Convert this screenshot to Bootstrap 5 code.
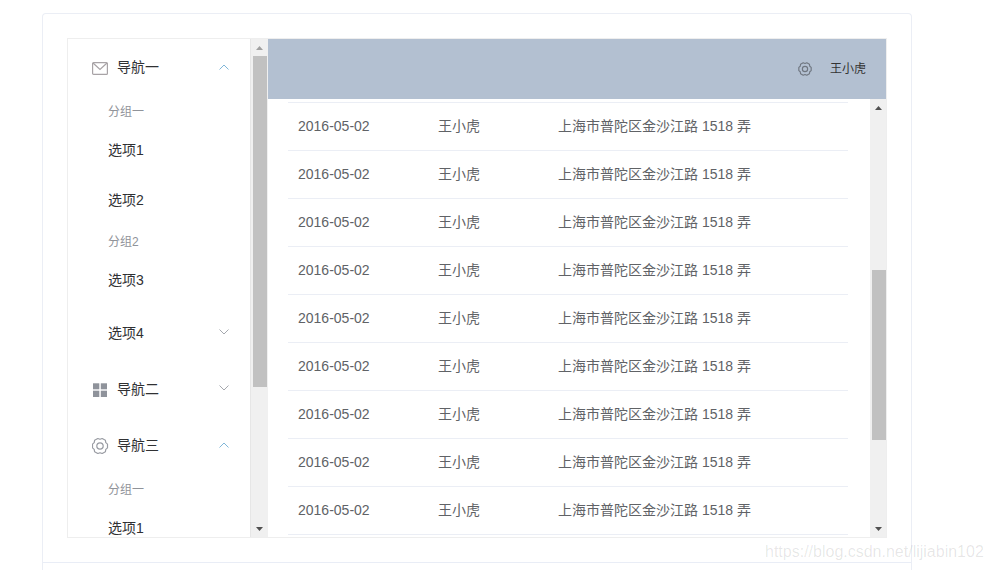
<!DOCTYPE html>
<html lang="zh">
<head>
<meta charset="utf-8">
<title>Layout</title>
<link href="https://cdn.jsdelivr.net/npm/bootstrap@5.3.0/dist/css/bootstrap.min.css" rel="stylesheet">
<style>
html,body{height:570px;overflow:hidden;background:#fff}
body{font-family:"Liberation Sans","Noto Sans CJK SC",sans-serif;font-size:14px;position:relative}
.shell{margin:13px 0 0 42px;width:870px;height:560px;border:1px solid #ebeef5;border-bottom:0;border-radius:4px 4px 0 0}
.shell-top{padding:24px 24px 24px;height:549px;border-bottom:1px solid #e9edf6}
.frame{height:500px;border:1px solid #eee;width:820px;overflow:hidden}
.side{width:183px;border-right:1px solid #e6e6e6;overflow:hidden;flex:none;color:#303133}
.nav-t{height:56px;padding:0 20px 0 24px}
.nav-t svg.ic{width:18px;height:18px;margin-right:7px;flex:none}
.nav-s{height:50px;padding-left:40px}
.nav-sub{height:56px;padding:0 20px 0 40px}
.grp{height:30px;padding-left:40px;padding-top:4px;font-size:12px;color:#909399}
.chev{width:10px;height:6px;margin-left:auto;margin-right:1px;flex:none}
.chev-d{margin-bottom:3px}
.bar{width:17px;flex:none;background:#f0f0f0}
.bar-btn{height:17px;color:#505050}
.bar-btn svg{width:7px;height:4px;display:block}
.thumb{background:#c1c1c1;margin:0 1px 0 2px}
.head{height:60px;background:#b3c0d1;padding-right:21px;color:#333;font-size:12px}
.head svg{width:14px;height:14px;margin-right:18px}
.pane{min-height:0}
.rows{padding-left:20px;padding-right:22px;overflow:hidden}
.rows table{width:560px;table-layout:fixed;margin:0;color:#606266;border-collapse:separate;border-spacing:0}
.rows td{height:48px;padding:0 0 0 10px;border:0;border-bottom:1px solid #ebeef5;vertical-align:middle;font-size:14px;color:#606266;background:transparent;box-shadow:none}
.rows .cut td{height:4px;padding:0}
.mark-w{position:absolute;left:765px;top:543px;font-size:16px;line-height:18px;color:rgba(0,0,0,.1);white-space:nowrap}
</style>
</head>
<body>
<div class="shell">
  <div class="shell-top">
    <div class="frame d-flex">
      <div class="side">
        <div class="nav-t d-flex align-items-center">
          <svg class="ic" viewBox="0 0 18 18" fill="none" stroke="#a8a3a6" stroke-width="1.2"><rect x=".6" y="4.600" width="14.800" height="11.800" rx="1"/><path d="M1 5l7 6.500L15 5"/></svg>
          <span>导航一</span>
          <svg class="chev" viewBox="0 0 10 6" fill="none" stroke="#7fb6d8"><path d="M.5 5.5L5 1l4.500 4.500"/></svg>
        </div>
        <div class="grp d-flex align-items-center">分组一</div>
        <div class="nav-s d-flex align-items-center">选项1</div>
        <div class="nav-s d-flex align-items-center">选项2</div>
        <div class="grp d-flex align-items-center">分组2</div>
        <div class="nav-s d-flex align-items-center">选项3</div>
        <div class="nav-sub d-flex align-items-center">
          <span>选项4</span>
          <svg class="chev chev-d" viewBox="0 0 10 6" fill="none" stroke="#a5a8ae"><path d="M.5.5L5 5 9.500.5"/></svg>
        </div>
        <div class="nav-t d-flex align-items-center">
          <svg class="ic" viewBox="0 0 18 18" fill="#8f939b"><rect x="1" y="3.300" width="6.300" height="6"/><rect x="8.800" y="3.300" width="6.200" height="6"/><rect x="1" y="10.700" width="6.300" height="6.300"/><rect x="8.800" y="10.700" width="6.200" height="6.300"/></svg>
          <span>导航二</span>
          <svg class="chev chev-d" viewBox="0 0 10 6" fill="none" stroke="#a5a8ae"><path d="M.5.5L5 5 9.500.5"/></svg>
        </div>
        <div class="nav-t d-flex align-items-center">
          <svg class="ic" viewBox="0 0 18 18" fill="none" stroke="#999ca3" stroke-width="1.2" stroke-linejoin="round"><g transform="translate(8 10)"><polygon points="7.5,-1.9 7.5,1.900 5.800,3.350 5.400,5.750 2.200,7.500 0,6.700 -2.200,7.500 -5.400,5.750 -5.800,3.350 -7.500,1.900 -7.500,-1.900 -5.800,-3.350 -5.400,-5.750 -2.200,-7.500 0,-6.700 2.200,-7.500 5.400,-5.750 5.800,-3.350"/><circle r="3.200"/></g></svg>
          <span>导航三</span>
          <svg class="chev" viewBox="0 0 10 6" fill="none" stroke="#7fb6d8"><path d="M.5 5.5L5 1l4.500 4.500"/></svg>
        </div>
        <div class="grp d-flex align-items-center">分组一</div>
        <div class="nav-s d-flex align-items-center">选项1</div>
      </div>
      <div class="bar d-flex flex-column">
        <div class="bar-btn d-flex align-items-center justify-content-center"><svg viewBox="0 0 7 4" fill="#a0a0a0"><path d="M3.500 0L7 4H0z"/></svg></div>
        <div class="flex-grow-1"><div class="thumb" style="height:331px"></div></div>
        <div class="bar-btn d-flex align-items-center justify-content-center"><svg viewBox="0 0 7 4" fill="#505050"><path d="M0 0h7L3.500 4z"/></svg></div>
      </div>
      <div class="flex-grow-1 d-flex flex-column pane">
        <div class="head d-flex align-items-center justify-content-end">
          <svg viewBox="-8.500 -8.500 17 17" fill="none" stroke="#6f7680" stroke-width="1.400" stroke-linejoin="round"><polygon points="7.500,-1.900 7.500,1.900 5.800,3.350 5.400,5.750 2.200,7.500 0,6.700 -2.200,7.500 -5.400,5.750 -5.800,3.350 -7.500,1.900 -7.500,-1.900 -5.800,-3.350 -5.400,-5.750 -2.200,-7.500 0,-6.700 2.200,-7.500 5.400,-5.750 5.800,-3.350"/><circle r="3.200"/></svg>
          <span>王小虎</span>
        </div>
        <div class="d-flex flex-grow-1 pane">
          <div class="rows flex-grow-1">
            <table class="table">
              <colgroup><col style="width:140px"><col style="width:120px"><col></colgroup>
              <tbody>
                <tr class="cut"><td colspan="3"></td></tr>
                <tr><td>2016-05-02</td><td>王小虎</td><td>上海市普陀区金沙江路 1518 弄</td></tr>
                <tr><td>2016-05-02</td><td>王小虎</td><td>上海市普陀区金沙江路 1518 弄</td></tr>
                <tr><td>2016-05-02</td><td>王小虎</td><td>上海市普陀区金沙江路 1518 弄</td></tr>
                <tr><td>2016-05-02</td><td>王小虎</td><td>上海市普陀区金沙江路 1518 弄</td></tr>
                <tr><td>2016-05-02</td><td>王小虎</td><td>上海市普陀区金沙江路 1518 弄</td></tr>
                <tr><td>2016-05-02</td><td>王小虎</td><td>上海市普陀区金沙江路 1518 弄</td></tr>
                <tr><td>2016-05-02</td><td>王小虎</td><td>上海市普陀区金沙江路 1518 弄</td></tr>
                <tr><td>2016-05-02</td><td>王小虎</td><td>上海市普陀区金沙江路 1518 弄</td></tr>
                <tr><td>2016-05-02</td><td>王小虎</td><td>上海市普陀区金沙江路 1518 弄</td></tr>
              </tbody>
            </table>
          </div>
          <div class="bar d-flex flex-column">
            <div class="bar-btn d-flex align-items-center justify-content-center"><svg viewBox="0 0 7 4" fill="#505050"><path d="M3.500 0L7 4H0z"/></svg></div>
            <div class="flex-grow-1"><div class="thumb" style="height:170px;margin-top:154px"></div></div>
            <div class="bar-btn d-flex align-items-center justify-content-center"><svg viewBox="0 0 7 4" fill="#505050"><path d="M0 0h7L3.500 4z"/></svg></div>
          </div>
        </div>
      </div>
    </div>
  </div>
</div>
<div class="mark-w">https://blog.csdn.net/lijiabin102</div>
<script src="https://cdn.jsdelivr.net/npm/bootstrap@5.3.0/dist/js/bootstrap.bundle.min.js"></script>
</body>
</html>
